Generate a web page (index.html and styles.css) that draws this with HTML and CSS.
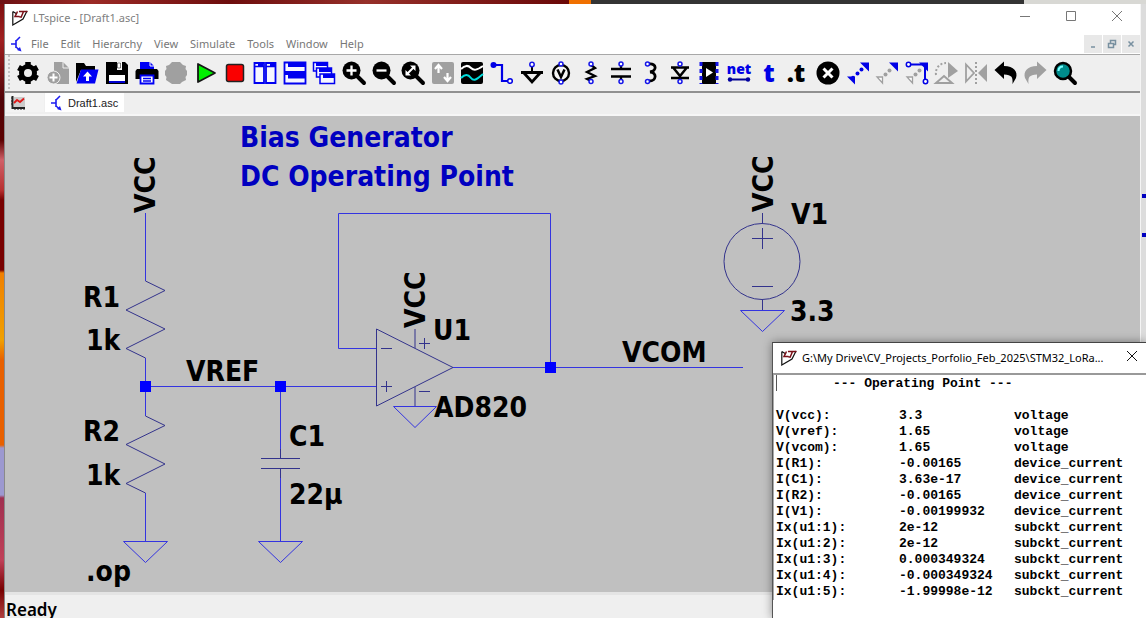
FILE: index.html
```html
<!DOCTYPE html>
<html lang="en">
<head>
<meta charset="utf-8">
<title>LTspice - [Draft1.asc]</title>
<link rel="stylesheet" href="styles.css">
</head>
<body>
<svg class="defs" aria-hidden="true">
  <symbol id="lt-logo" viewBox="0 0 16 16">
    <path d="M.8 1.500V15L11 9L15 1M.8 1.500L5 4" fill="none" stroke="#111" stroke-width="1.200"/>
    <path d="M5.500 1.500L3 6.500H7.500M7 1.500H15.500M11.500 1.500L9 7.500M7.500 7H10" fill="none" stroke="#7a1018" stroke-width="1.500"/>
  </symbol>
  <symbol id="transistor" viewBox="0 0 12 16">
    <path d="M9 1L5 5V11L8.500 14M0 8H5M5 4V12" fill="none" stroke="#1c1cf0" stroke-width="1.600"/>
    <path d="M10.500 15.500L6 14L9 11Z" fill="#1c1cf0"/>
  </symbol>
</svg>
<div class="desktop">
  <div class="edge-mark edge-mark-a"></div>
  <div class="edge-mark edge-mark-b"></div>
  <div class="window">
    <header class="titlebar">
      <svg class="logo" aria-hidden="true"><use href="#lt-logo"/></svg>
      <h1 class="title">LTspice - [Draft1.asc]</h1>
      <div class="window-buttons">
        <button aria-label="Minimize"><svg viewBox="0 0 12 12"><path d="M1 6.500H11"/></svg></button>
        <button aria-label="Maximize"><svg viewBox="0 0 12 12"><path d="M1.500 1.500H10.500V10.500H1.500Z"/></svg></button>
        <button aria-label="Close"><svg viewBox="0 0 12 12"><path d="M1 1L11 11M11 1L1 11"/></svg></button>
      </div>
    </header>
    <nav class="menubar">
      <svg class="doc-icon" aria-hidden="true"><use href="#transistor"/></svg>
      <button>File</button><button>Edit</button><button>Hierarchy</button><button>View</button><button>Simulate</button><button>Tools</button><button>Window</button><button>Help</button>
      <div class="child-buttons">
        <button aria-label="Minimize document"><svg viewBox="0 0 10 10"><path d="M3 8H7"/></svg></button>
        <button aria-label="Restore document"><svg viewBox="0 0 10 10"><path d="M3.500 4V1.500H8.500V5.500H7M1.500 4.500H6.500V8.500H1.500Z"/></svg></button>
        <button aria-label="Close document"><svg viewBox="0 0 10 10"><path d="M2.500 2.500L7.500 7.500M7.500 2.500L2.500 7.500" stroke-width="1.800"/></svg></button>
      </div>
    </nav>
    <div class="toolbar" role="toolbar" aria-label="Schematic tools">
      <button aria-label="Settings"><svg viewBox="0 0 24 24"><circle cx="12" cy="12" r="6.500" fill="none" stroke="#000" stroke-width="5"/><path d="M12 1V5M12 19V23M2.500 6.500L6 8.500M18 15.500L21.500 17.500M2.500 17.500L6 15.500M18 8.500L21.500 6.500" stroke="#000" stroke-width="5.500"/></svg></button>
      <button aria-label="New schematic"><svg viewBox="0 0 24 24"><path d="M8 1H17L23 7V23H8Z" fill="#a0a0a0"/><path d="M17 1V7H23" fill="none" stroke="#efefef"/><circle cx="7.500" cy="16.500" r="6.500" fill="#a0a0a0" stroke="#efefef"/><path d="M7.500 12.500V20.500M3.500 16.500H11.500" stroke="#fff" stroke-width="2"/></svg></button>
      <button aria-label="Open"><svg viewBox="0 0 24 24"><path d="M1 21V2H9L11 5H20V9H6Z" fill="#000"/><path d="M6 8.500H23.500L20 22.500H1.500Z" fill="#0000f5"/><path d="M11 20V15.500H8L12.500 10.500L17 15.500H14V20Z" fill="#fff"/></svg></button>
      <button aria-label="Save"><svg viewBox="0 0 24 24"><path d="M1 1H20L23 4V23H1Z" fill="#000"/><path d="M7 1H17V9H7Z" fill="#fff"/><path d="M7 1H12V9H7Z" fill="#000"/><path d="M12.500 2H15.500V7H12.500Z" fill="#fff" stroke="#000" stroke-width=".5"/><path d="M4 14H20V21H4Z" fill="#fff"/><path d="M4 20H20V22H4Z" fill="#0000d0"/></svg></button>
      <button aria-label="Print"><svg viewBox="0 0 24 24"><path d="M5 8V1H15L19 5V8Z" fill="#0000f5"/><path d="M15 1V5H19" stroke="#fff" fill="none"/><path d="M2 8H22L23.500 10V18H.5V10Z" fill="#000"/><path d="M5.500 14.500H18.500V22.500H5.500Z" fill="#fff" stroke="#0000f5" stroke-width="1.800"/><path d="M8 17.500H16M8 20H16" stroke="#0000f5" stroke-width="1.500"/></svg></button>
      <button aria-label="Halt"><svg viewBox="0 0 24 24"><path d="M8 1H16L19 4L22 5L21.500 8L23 10V14L21.500 16L22 19L18 21L16 23H8L5 21L2 19L2.500 16L1 14V10L2.500 8L2 5L5 4Z" fill="#a0a0a0"/></svg></button>
      <button aria-label="Run"><svg viewBox="0 0 24 24"><path d="M4 3V21L21 12Z" fill="#00f000" stroke="#151515" stroke-width="1.800" stroke-linejoin="round"/></svg></button>
      <button aria-label="Stop"><svg viewBox="0 0 24 24"><rect x="3.500" y="3.500" width="17" height="17" rx="2" fill="#fa0000" stroke="#222" stroke-width="1.500"/></svg></button>
      <button aria-label="Tile vertically"><svg viewBox="0 0 24 24"><path d="M1.500 2H11V22H1.500ZM13 2H22.500V22H13Z" fill="#f6f6ff" stroke="#0000f0" stroke-width="1.800"/><path d="M1 5.500H11M13 5.500H23" stroke="#0000f0" stroke-width="1.500"/><path d="M5 3H10V5H5ZM17 3H22V5H17Z" fill="#0000f0"/></svg></button>
      <button aria-label="Tile horizontally"><svg viewBox="0 0 24 24"><path d="M1.500 1.500H22.500V11H1.500ZM1.500 13H22.500V22.500H1.500Z" fill="#f6f6ff" stroke="#0000f0" stroke-width="1.800"/><path d="M5 1.500H22.500V6H5ZM5 13H22.500V17.500H5Z" fill="#0000f0"/></svg></button>
      <button aria-label="Cascade"><svg viewBox="0 0 24 24"><g fill="#f6f6ff" stroke="#0000f0" stroke-width="1.500"><path d="M1.500 1.500H15.500V10H1.500Z"/><path d="M4.500 7H19.500V16H4.500Z"/><path d="M8 13H22.500V22.500H8Z"/></g><path d="M4 1H16V5H4ZM7 7H20V11H7ZM11 13H23V17H11Z" fill="#0000f0"/></svg></button>
      <button aria-label="Zoom in"><svg viewBox="0 0 24 24"><path d="M15 15L22 22" stroke="#000" stroke-width="4" stroke-linecap="round"/><circle cx="9.500" cy="9.500" r="9" fill="#000"/><path d="M9.500 4.500V14.500M4.500 9.500H14.500" stroke="#fff" stroke-width="2.300"/></svg></button>
      <button aria-label="Zoom out"><svg viewBox="0 0 24 24"><path d="M15 15L22 22" stroke="#000" stroke-width="4" stroke-linecap="round"/><circle cx="9.500" cy="9.500" r="9" fill="#000"/><path d="M4.500 9.500H14.500" stroke="#fff" stroke-width="2.300"/></svg></button>
      <button aria-label="Zoom to fit"><svg viewBox="0 0 24 24"><path d="M15 15L22 22" stroke="#000" stroke-width="4" stroke-linecap="round"/><circle cx="9.500" cy="9.500" r="9" fill="#000"/><path d="M6 13L13 6" stroke="#fff" stroke-width="2"/><path d="M9 4.500H14.500V10ZM4.500 9V14.500H10Z" fill="#fff"/></svg></button>
      <button aria-label="Autorange"><svg viewBox="0 0 24 24"><rect x="1" y="1" width="22" height="22" rx="2" fill="#a0a0a0"/><path d="M7.500 12V5M4 8L7.500 4L11 8M16.500 12V19M13 16L16.500 20L20 16" fill="none" stroke="#fff" stroke-width="2.200"/></svg></button>
      <button aria-label="Waveforms"><svg viewBox="0 0 24 24"><rect x="1" y="1" width="22" height="22" rx="2" fill="#000"/><path d="M1 8C5 4 8 4 11 7S17 9 23 5" fill="none" stroke="#fff" stroke-width="2"/><path d="M1 17C5 13 8 13 11 17S17 18 23 13" fill="none" stroke="#00dcdc" stroke-width="2"/></svg></button>
      <button aria-label="Wire"><svg viewBox="0 0 24 24"><path d="M3 4H12V20H18" fill="none" stroke="#0000e6" stroke-width="2.200"/><circle cx="3.500" cy="4" r="3" fill="#0000e6"/><circle cx="20" cy="20" r="2.300" fill="#fff" stroke="#0000e6" stroke-width="1.500"/></svg></button>
      <button aria-label="Ground"><svg viewBox="0 0 24 24"><path d="M1 11.500H23M4 12L12 21L20 12" fill="none" stroke="#000" stroke-width="2.800"/><path d="M12 5V11" stroke="#000" stroke-width="2"/><circle cx="12" cy="3.500" r="2.200" fill="#fff" stroke="#1515e8" stroke-width="1.500"/></svg></button>
      <button aria-label="Voltage source"><svg viewBox="0 0 24 24"><circle cx="12" cy="12" r="8" fill="#f5f5f5" stroke="#000" stroke-width="2.400"/><path d="M8.500 8.500L12 16L15.500 8.500" fill="none" stroke="#000" stroke-width="2.500"/><g fill="#fff" stroke="#1515e8" stroke-width="1.500"><circle cx="12" cy="3" r="2"/><circle cx="12" cy="21" r="2"/></g></svg></button>
      <button aria-label="Resistor"><svg viewBox="0 0 24 24"><path d="M12 4L16 7L8 11L16 15L8 18L12 20" fill="none" stroke="#000" stroke-width="2.300"/><g fill="#fff" stroke="#1515e8" stroke-width="1.500"><circle cx="12" cy="3" r="2"/><circle cx="12" cy="20.500" r="2"/></g></svg></button>
      <button aria-label="Capacitor"><svg viewBox="0 0 24 24"><path d="M2 8H22M2 15.500H22M12 4V8M12 16V20" stroke="#000" stroke-width="2.300"/><g fill="#fff" stroke="#1515e8" stroke-width="1.500"><circle cx="12" cy="3" r="2"/><circle cx="12" cy="20.500" r="2"/></g></svg></button>
      <button aria-label="Inductor"><svg viewBox="0 0 24 24"><path d="M11 3C19 2 19 10 12 11C19 11 19 20 11 20" fill="none" stroke="#000" stroke-width="2.800"/><g fill="#fff" stroke="#1515e8" stroke-width="1.500"><circle cx="9.500" cy="3" r="2"/><circle cx="9.500" cy="20.500" r="2"/></g></svg></button>
      <button aria-label="Diode"><svg viewBox="0 0 24 24"><path d="M3 6.500H21M3 17H21M5.500 7L12 15L18.500 7" fill="none" stroke="#000" stroke-width="2.500"/><g fill="#fff" stroke="#1515e8" stroke-width="1.500"><circle cx="12" cy="3" r="2"/><circle cx="12" cy="20.500" r="2"/></g></svg></button>
      <button aria-label="Component"><svg viewBox="0 0 24 24"><path d="M5 1H19V23H5Z" fill="#000"/><path d="M4 1V23M20 1V23" stroke="#1515e8" stroke-width="3" stroke-dasharray="4 3"/><path d="M9 7V16L16 11.500Z" fill="#fff"/></svg></button>
      <button aria-label="Label net"><svg viewBox="0 0 24 24"><text class="icon-text icon-net blue" x="12" y="13">net</text><path d="M2 18.500H22" stroke="#000090" stroke-width="2"/><circle cx="3" cy="18.500" r="2.200" fill="#0000a0"/><circle cx="21" cy="18.500" r="2.200" fill="#0000a0"/></svg></button>
      <button aria-label="Text"><svg viewBox="0 0 24 24"><text class="icon-text blue" x="12" y="21">t</text></svg></button>
      <button aria-label="SPICE directive"><svg viewBox="0 0 24 24"><text class="icon-text" x="10" y="21">.t</text></svg></button>
      <button aria-label="Delete"><svg viewBox="0 0 24 24"><circle cx="12" cy="12" r="11.500" fill="#000"/><path d="M7.500 7.500L16.500 16.500M16.500 7.500L7.500 16.500" stroke="#fff" stroke-width="3"/></svg></button>
      <button aria-label="Duplicate"><svg viewBox="0 0 24 24"><path d="M14 1.500H23V10.500ZM1 15.500H9V23.500Z" fill="#0000e6"/><g fill="#0000e6"><circle cx="7" cy="16.500" r="1.800"/><circle cx="11.500" cy="12.500" r="2"/><circle cx="15.500" cy="8.500" r="2"/></g></svg></button>
      <button aria-label="Move"><svg viewBox="0 0 24 24"><path d="M14 1.500H23V10.500Z" fill="#0000e6"/><path d="M2 16H7.500V22Z" fill="#fff" stroke="#a0a0a0" stroke-width="1.300"/><g fill="#a0a0a0"><circle cx="10.500" cy="13.500" r="2"/><circle cx="14.500" cy="9.500" r="2"/></g></svg></button>
      <button aria-label="Drag"><svg viewBox="0 0 24 24"><path d="M14 1.500H23V10.500Z" fill="#0000e6"/><path d="M3 3.500H20V20" fill="none" stroke="#0000e6" stroke-width="2"/><path d="M2 16H7.500V22Z" fill="#fff" stroke="#a0a0a0" stroke-width="1.300"/><g fill="#a0a0a0"><circle cx="10.500" cy="13.500" r="2"/><circle cx="14.500" cy="9.500" r="2"/></g><g fill="#fff" stroke="#0000e6" stroke-width="1.500"><circle cx="3.500" cy="3.500" r="2.200"/><circle cx="20.500" cy="20.500" r="2.200"/></g></svg></button>
      <button aria-label="Rotate"><svg viewBox="0 0 24 24"><path d="M2 14C1 7 6 2 12 2" fill="none" stroke="#a0a0a0" stroke-width="2" stroke-dasharray="2 2"/><path d="M14 1L24 10L14 17Z" fill="#a0a0a0"/><path d="M2 22H18L10 15Z" fill="none" stroke="#a0a0a0" stroke-width="2"/></svg></button>
      <button aria-label="Mirror"><svg viewBox="0 0 24 24"><path d="M2 3.500V20.500L10 12Z" fill="none" stroke="#a0a0a0" stroke-width="1.800"/><path d="M23 3V21L14 12Z" fill="#a0a0a0"/><path d="M12 1V23" stroke="#a0a0a0" stroke-width="2" stroke-dasharray="2 2"/></svg></button>
      <button aria-label="Undo"><svg viewBox="0 0 24 24"><path d="M.5 9L10 .5V5C20 5 24 11 22 17L18.500 23C19 16 18 14 10 13.500V18Z" fill="#000"/></svg></button>
      <button aria-label="Redo"><svg viewBox="0 0 24 24"><path d="M23.500 9L14 .5V5C4 5 0 11 2 17L5.500 23C5 16 6 14 14 13.500V18Z" fill="#a0a0a0"/></svg></button>
      <button aria-label="Search"><svg viewBox="0 0 24 24"><path d="M16 16L22 22" stroke="#000" stroke-width="4" stroke-linecap="round"/><circle cx="10" cy="10" r="8" fill="#008c8c" stroke="#000" stroke-width="2.500"/><path d="M5.500 10C5.500 7 7 5.500 10 5.500" fill="none" stroke="#7ff" stroke-width="2"/></svg></button>
    </div>
    <div class="tabs">
      <button class="tab tab-plot" aria-label="Waveform window"><svg viewBox="0 0 14 14"><path d="M1.500 0V12H14" fill="none" stroke="#222" stroke-width="2"/><path d="M0 2H2M0 5H2M0 8H2M4 12V14M7 12V14M10 12V14M13 12V14" stroke="#222"/><path d="M3 1H14V11H3Z" fill="#ccc"/><path d="M3 7L6 4L9 6L13 2.500" fill="none" stroke="#e01818" stroke-width="1.800"/></svg></button>
      <button class="tab tab-current"><svg class="doc-icon" aria-hidden="true"><use href="#transistor"/></svg>Draft1.asc</button>
    </div>
    <main class="canvas">
      <svg class="schematic" role="img" aria-label="Bias generator schematic">
        <g transform="translate(-5 -116)">
          <g class="wire">
            <path d="M145.500 213V281M145.500 358V416M145.500 493V541M145 386.500H377M280.500 387V449M280.500 478V541"/>
            <path d="M376 348.500H338.500V213.500H550.500V367M453 367.500H743"/>
            <path d="M123.500 541.500H167.500L145.500 562.500Z"/>
            <path d="M258.500 541.500H302.500L280.500 562.500Z"/>
            <path d="M393.500 406.500H436.500L415 427.500Z"/>
            <path d="M740.500 310.500H784.500L762.500 331.500Z"/>
          </g>
          <g class="part">
            <path d="M145.500 281L165 290.500L126 310L165 329L126 348.500L145.500 358"/>
            <path d="M145.500 416L165 425.500L126 444.500L165 464L126 483.500L145.500 493"/>
            <path d="M280.500 449V458.500M261 458.500H300M261 468.500H300M280.500 468.500V478"/>
            <path d="M376.500 329V406L453 367.500ZM381 348.500H392M381 386.500H392M386.500 381V392M415 329V348M415 387V406M419 343.500H430M424.500 338V349M419 391.500H430"/>
            <circle cx="762" cy="261.500" r="38"/>
            <path d="M762.500 213V223M762.500 300V310M752 238.500H773M762.500 228V249M752 286.500H773"/>
          </g>
          <g class="node">
            <rect x="140" y="381" width="11" height="11"/>
            <rect x="275" y="381" width="11" height="11"/>
            <rect x="545" y="362" width="11" height="11"/>
          </g>
          <g class="label">
            <text class="note" x="240" y="147">Bias Generator</text>
            <text class="note" x="240" y="186">DC Operating Point</text>
            <text transform="translate(155 213) rotate(-90)">VCC</text>
            <text transform="translate(425 328) rotate(-90)">VCC</text>
            <text transform="translate(773 212) rotate(-90)">VCC</text>
            <text x="83" y="307">R1</text>
            <text x="86" y="350">1k</text>
            <text x="186" y="381">VREF</text>
            <text x="83" y="441">R2</text>
            <text x="86" y="485">1k</text>
            <text x="289" y="446">C1</text>
            <text x="289" y="504">22µ</text>
            <text x="86" y="581">.op</text>
            <text x="433" y="340">U1</text>
            <text x="434" y="417">AD820</text>
            <text x="622" y="362">VCOM</text>
            <text x="791" y="224">V1</text>
            <text x="790" y="321">3.3</text>
          </g>
        </g>
      </svg>
    </main>
    <footer class="status">Ready</footer>
  </div>
  <section class="results" aria-label="Operating point results">
    <header class="results-title">
      <svg class="logo" aria-hidden="true"><use href="#lt-logo"/></svg>
      <h2>G:\My Drive\CV_Projects_Porfolio_Feb_2025\STM32_LoRa...</h2>
      <button aria-label="Close results"><svg viewBox="0 0 12 12"><path d="M1 1L11 11M11 1L1 11"/></svg></button>
    </header>
    <div class="results-body">
      <table>
        <caption>--- Operating Point ---</caption>
        <tbody>
          <tr><th scope="row">V(vcc):</th><td>3.3</td><td>voltage</td></tr>
          <tr><th scope="row">V(vref):</th><td>1.65</td><td>voltage</td></tr>
          <tr><th scope="row">V(vcom):</th><td>1.65</td><td>voltage</td></tr>
          <tr><th scope="row">I(R1):</th><td>-0.00165</td><td>device_current</td></tr>
          <tr><th scope="row">I(C1):</th><td>3.63e-17</td><td>device_current</td></tr>
          <tr><th scope="row">I(R2):</th><td>-0.00165</td><td>device_current</td></tr>
          <tr><th scope="row">I(V1):</th><td>-0.00199932</td><td>device_current</td></tr>
          <tr><th scope="row">Ix(u1:1):</th><td>2e-12</td><td>subckt_current</td></tr>
          <tr><th scope="row">Ix(u1:2):</th><td>2e-12</td><td>subckt_current</td></tr>
          <tr><th scope="row">Ix(u1:3):</th><td>0.000349324</td><td>subckt_current</td></tr>
          <tr><th scope="row">Ix(u1:4):</th><td>-0.000349324</td><td>subckt_current</td></tr>
          <tr><th scope="row">Ix(u1:5):</th><td>-1.99998e-12</td><td>subckt_current</td></tr>
        </tbody>
      </table>
    </div>
  </section>
</div>
</body>
</html>
```
FILE: styles.css
```css
* { box-sizing: border-box; }

body {
  margin: 0;
  font: 11px/16px "Noto Sans", "Open Sans", sans-serif;
}

button {
  padding: 0;
  border: 0;
  background: none;
  color: inherit;
  font: inherit;
}

.defs { position: absolute; width: 0; height: 0; }

.desktop {
  position: relative;
  display: flex;
  height: 100vh;
  padding: 4px 5px 0 4px;
  overflow: hidden;
  background:
    linear-gradient(90deg, #6d1013 0, #9b2a26 8%, #6d0d0d 20%, #96302a 32%, #6a0808 569px, #f07000 569px, #f07000 591px, #343434 591px, #343434 1024px, #d8d8d4 1024px) 0 0 / 100% 4px no-repeat,
    linear-gradient(180deg, #7a0c0c 0, #a02020 40px, #500408 100px, #5c0000 140px, #d06068 160px, #b83030 190px, #780000 200px, #780000 270px, #f08000 273px, #f0a000 340px, #e86000 360px, #e86000 445px, #9c98d0 448px, #9c98d0 495px, #a03050 498px, #c04058 560px, #780000 590px, #b04040 100%) 0 0 / 5px 100% no-repeat,
    #dcdcdc;
}

.edge-mark { position: absolute; right: 0; width: 4px; height: 4px; background: #0000c0; }
.edge-mark-a { top: 194px; }
.edge-mark-b { top: 233px; }

.window {
  display: flex;
  flex: 1;
  flex-direction: column;
  min-width: 0;
  border-left: 1px solid #8a8a8a;
  border-right: 1px solid #f4f4f4;
  background: #efefef;
}

.titlebar {
  display: flex;
  align-items: center;
  flex: none;
  height: 28px;
  padding-left: 7px;
  background: #fff;
  color: #808080;
}

.logo { flex: none; width: 16px; height: 16px; }
.title { flex: 1; margin: 0 0 0 5px; font-size: 11px; font-weight: 400; }
.window-buttons { display: flex; }
.window-buttons button { width: 46px; height: 28px; }
.window-buttons svg { width: 12px; height: 12px; }
.window-buttons path { fill: none; stroke: #777; }

.menubar {
  display: flex;
  align-items: center;
  flex: none;
  gap: 12px;
  height: 23px;
  padding: 2px 0 0 6px;
  border-bottom: 1px solid #a8a8a8;
  background: #fff;
  color: #777;
}

.doc-icon { flex: none; width: 12px; height: 16px; }
.menubar > .doc-icon { margin-right: -4px; }
.child-buttons { display: flex; gap: 1px; margin-left: auto; }
.child-buttons button { width: 18px; height: 18px; background: #e8e8e8; line-height: 10px; }
.child-buttons svg { width: 10px; height: 10px; }
.child-buttons path { fill: none; stroke: #7890a0; stroke-width: 1.5px; }

.toolbar {
  display: flex;
  align-items: center;
  justify-content: space-between;
  flex: none;
  width: 100%;
  height: 38px;
  padding: 0 63px 1px 11px;
  border-bottom: 2px solid #909090;
  background: radial-gradient(circle, #c4c4c4 1px, transparent 1px) 2px 3px / 4px 4px repeat-y;
}

.toolbar button, .toolbar svg { display: block; width: 24px; height: 24px; overflow: visible; }
.icon-text { font-family: "Open Sans", sans-serif; font-size: 25px; font-weight: 800; text-anchor: middle; }
.icon-net { font-size: 14px; }
.blue { fill: #0000e6; }

.tabs {
  display: flex;
  flex: none;
  gap: 1px;
  height: 23px;
  padding: 0 0 2px 1px;
  border-bottom: 2px solid #f6f6f6;
}

.tab { display: flex; align-items: center; padding: 0 6px; font-family: "Liberation Sans", sans-serif; color: #222; }
.tab-plot { width: 38px; background: #f3f3f3; padding-left: 5px; }
.tab-plot svg { width: 14px; height: 14px; }
.tab-current { gap: 5px; background: #fff; }

.canvas { flex: 1; min-height: 0; background: #c0c0c0; }
.schematic { display: block; width: 100%; height: 100%; }
.wire, .part { fill: none; stroke-width: 1px; }
.wire { stroke: #3434e0; }
.part { stroke: #33338c; }
.node { fill: #0000ff; }
.label { fill: #000; font-family: "DejaVu Sans Condensed", "DejaVu Sans", sans-serif; font-size: 28px; font-weight: 700; }
.note { fill: #0000c0; }

.status {
  flex: none;
  height: 26px;
  padding: 6px 1px 0;
  border-top: 3px solid #e4e4e4;
  font-size: 17px;
  font-weight: 600;
  line-height: 18px;
}

.results {
  position: absolute;
  right: 0;
  bottom: 0;
  display: flex;
  flex-direction: column;
  width: 374px;
  height: 276px;
  border-top: 1px solid #444;
  border-left: 1px solid #555;
  background: #fff;
  box-shadow: 0 0 9px rgba(0, 0, 0, .4);
}

.results-title {
  display: flex;
  align-items: center;
  height: 32px;
  padding-left: 8px;
  border-bottom: 2px solid #999;
  color: #000;
}

.results-title h2 { flex: 1; margin: 0 0 0 5px; font-size: 11px; font-weight: 400; white-space: nowrap; }
.results-title button { width: 28px; height: 30px; }
.results-title button svg { width: 12px; height: 12px; }
.results-title button path { fill: none; stroke: #111; }

.results-body { padding-left: 2px; border-left: 1px solid #aaa; }
.results-body table { width: 100%; border-collapse: collapse; table-layout: fixed; font: 700 13px/16px "Liberation Mono", monospace; text-align: left; }
.results-body caption { padding: 1px 0 16px 56px; border-left: 1px solid #555; border-image: linear-gradient(#555 16px, transparent 16px) 1; text-align: left; }
.results-body th, .results-body td { padding: 0; }
.results-body th { width: 123px; font-weight: 700; }
.results-body td:nth-child(2) { width: 115px; }
```
